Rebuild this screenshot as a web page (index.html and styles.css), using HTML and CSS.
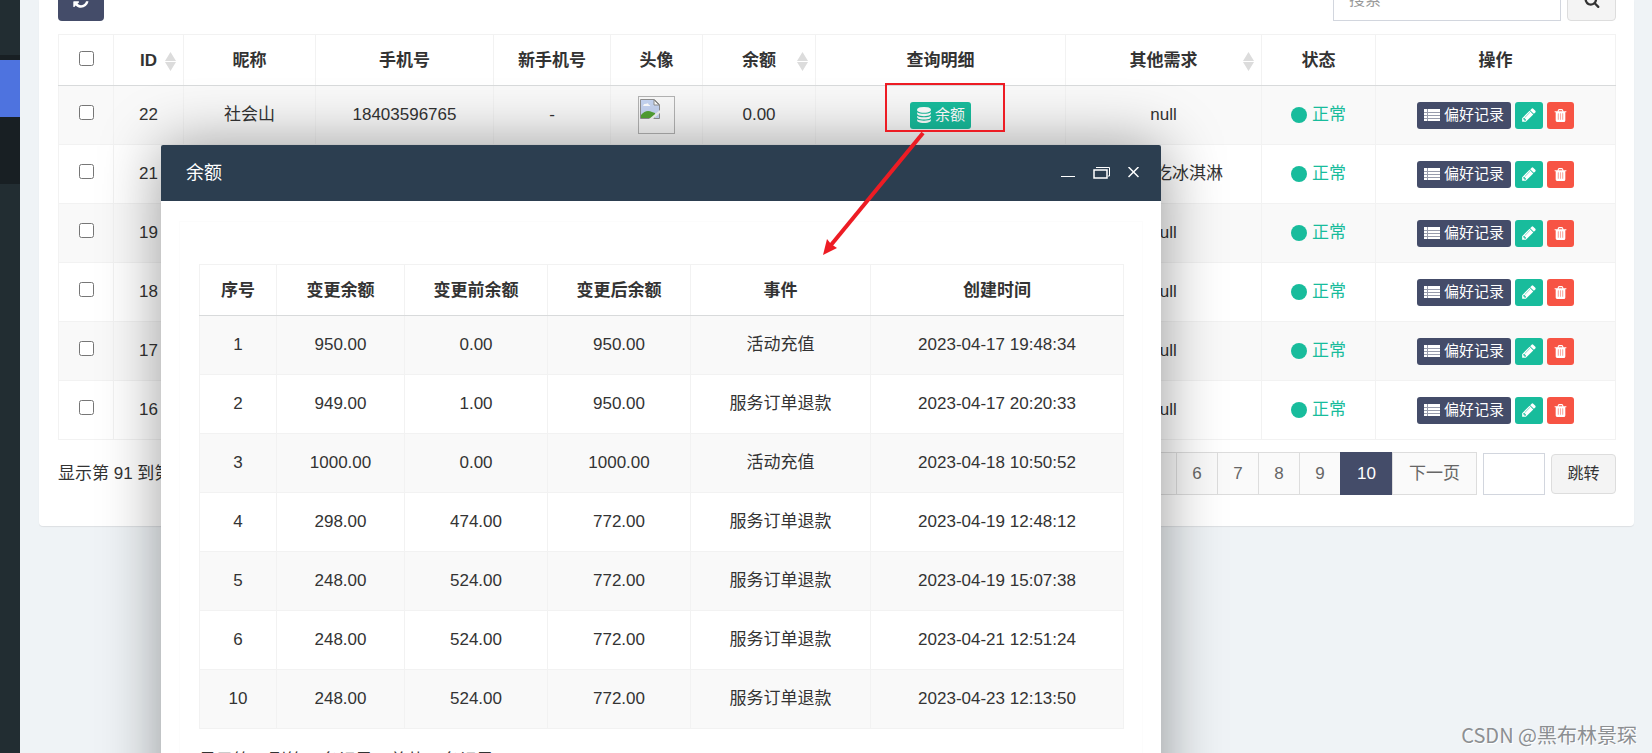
FILE: index.html
```html
<!DOCTYPE html>
<html lang="zh-CN">
<head>
<meta charset="utf-8">
<title>余额</title>
<link rel="stylesheet" href="styles.css">
</head>
<body>
<svg class="sprite" aria-hidden="true">
  <symbol id="i-list" viewBox="0 0 16 12"><path d="M0 0h3v3H0zM4 0h12v3H4zM0 4h3v2H0zM4 4h12v2H4zM0 7h3v2H0zM4 7h12v2H4zM0 10h3v2H0zM4 10h12v2H4z"/><path d="M0 0h16v12H0z" opacity=".45"/></symbol>
  <symbol id="i-pencil" viewBox="0 0 1792 1792"><path d="M491 1536l91-91-235-235-91 91v107h128v128h107zm523-928q0-22-22-22-10 0-17 7l-542 542q-7 7-7 17 0 22 22 22 10 0 17-7l542-542q7-7 7-17zm-54-192l416 416-832 832h-416v-416zm683 96q0 53-37 90l-166 166-416-416 166-165q36-38 90-38 53 0 91 38l235 234q37 39 37 91z"/></symbol>
  <symbol id="i-trash" viewBox="0 0 1792 1792"><path d="M704 1376v-704q0-14-9-23t-23-9h-64q-14 0-23 9t-9 23v704q0 14 9 23t23 9h64q14 0 23-9t9-23zm256 0v-704q0-14-9-23t-23-9h-64q-14 0-23 9t-9 23v704q0 14 9 23t23 9h64q14 0 23-9t9-23zm256 0v-704q0-14-9-23t-23-9h-64q-14 0-23 9t-9 23v704q0 14 9 23t23 9h64q14 0 23-9t9-23zm-544-992h448l-48-117q-7-9-17-11h-317q-10 2-17 11zm928 32v64q0 14-9 23t-23 9h-96v948q0 83-47 143.500t-113 60.500h-832q-66 0-113-58.500t-47-141.500v-952h-96q-14 0-23-9t-9-23v-64q0-14 9-23t23-9h309l70-167q15-37 54-63t79-26h320q40 0 79 26t54 63l70 167h309q14 0 23 9t9 23z"/><path d="M520 600h740v860H520z" opacity=".5"/></symbol>
  <symbol id="i-database" viewBox="0 0 1792 1792"><path d="M896 768q237 0 443-43t325-127v170q0 69-103 128t-280 93.500-385 34.500-385-34.500-280-93.500-103-128v-170q119 84 325 127t443 43zm0 768q237 0 443-43t325-127v170q0 69-103 128t-280 93.500-385 34.500-385-34.500-280-93.500-103-128v-170q119 84 325 127t443 43zm0-384q237 0 443-43t325-127v170q0 69-103 128t-280 93.500-385 34.500-385-34.500-280-93.500-103-128v-170q119 84 325 127t443 43zm0-1152q208 0 385 34.500t280 93.500 103 128v128q0 69-103 128t-280 93.500-385 34.500-385-34.500-280-93.500-103-128v-128q0-69 103-128t280-93.500 385-34.500z"/></symbol>
  <symbol id="i-search" viewBox="0 0 1792 1792"><path d="M1216 832q0-185-131.500-316.500t-316.500-131.500-316.500 131.500-131.500 316.500 131.500 316.500 316.500 131.500 316.500-131.500 131.500-316.500zm512 832q0 52-38 90t-90 38q-54 0-90-38l-343-342q-179 124-399 124-143 0-273.500-55.500t-225-150-150-225-55.500-273.500 55.500-273.500 150-225 225-150 273.500-55.500 273.500 55.500 225 150 150 225 55.500 273.500q0 220-124 399l343 343q37 37 37 90z"/></symbol>
  <symbol id="i-refresh" viewBox="0 0 1792 1792"><path d="M1639 1056q0 5-1 7-64 268-268 434.500t-478 166.500q-146 0-282.500-55t-243.500-157l-129 129q-19 19-45 19t-45-19-19-45v-448q0-26 19-45t45-19h448q26 0 45 19t19 45-19 45l-137 137q71 66 161 102t187 36q134 0 250-65t186-179q11-17 53-117 8-23 30-23h192q13 0 22.500 9.500t9.500 22.500zm25-800v448q0 26-19 45t-45 19h-448q-26 0-45-19t-19-45 19-45l138-138q-148-137-349-137-134 0-250 65t-186 179q-11 17-53 117-8 23-30 23h-199q-13 0-22.500-9.500t-9.500-22.500v-7q65-268 270-434.500t480-166.500q146 0 284 55.500t245 156.500l130-129q19-19 45-19t45 19 19 45z"/></symbol>
  <symbol id="i-sort" viewBox="0 0 11 19"><path d="M5.500 0L11 9H0zM0 10h11L5.500 19z"/></symbol>
</svg>

<div class="app">
  <aside class="sidebar">
    <div class="side-gap"></div>
    <div class="side-active"></div>
    <div class="side-sub"></div>
  </aside>

  <main class="content">
    <section class="panel">
      <div class="toolbar">
        <button class="btn-refresh" aria-label="刷新"><svg><use href="#i-refresh"/></svg></button>
        <div class="search">
          <input type="text" placeholder="搜索" aria-label="搜索">
          <button class="btn-default btn-search" aria-label="查找"><svg><use href="#i-search"/></svg></button>
        </div>
      </div>

      <table class="grid users">
        <colgroup><col class="u1"><col class="u2"><col class="u3"><col class="u4"><col class="u5"><col class="u6"><col class="u7"><col class="u8"><col class="u9"><col class="u10"><col class="u11"></colgroup>
        <thead>
          <tr>
            <th class="pick"><input type="checkbox" aria-label="全选"></th>
            <th><div class="sortable"><span>ID</span><svg><use href="#i-sort"/></svg></div></th>
            <th>昵称</th><th>手机号</th><th>新手机号</th><th>头像</th>
            <th><div class="sortable"><span>余额</span><svg><use href="#i-sort"/></svg></div></th>
            <th>查询明细</th>
            <th><div class="sortable"><span>其他需求</span><svg><use href="#i-sort"/></svg></div></th>
            <th>状态</th><th>操作</th>
          </tr>
        </thead>
        <tbody>
          <tr>
            <td class="pick"><input type="checkbox" aria-label="选择 22"></td><td>22</td><td>社会山</td><td>18403596765</td><td>-</td>
            <td><div class="avatar"><svg viewBox="0 0 20 20" role="img" aria-label="头像"><path d="M.5.500h14l5 5v14H.5z" fill="#c6d5f3" stroke="#909090"/><path d="M14 1v5h5z" fill="#fff" stroke="#909090"/><path d="M3 7q1-3 3-2 2-2 3 1 2 0 1 1z" fill="#fff"/><path d="M1 19v-3q5-6 11-3l3 1v5z" fill="#53a334"/><path d="M9 20l11-9v3l-7 6z" fill="#f4f4f4"/></svg></div></td>
            <td>0.00</td>
            <td><button class="btn green"><svg class="ico-16"><use href="#i-database"/></svg>余额</button></td>
            <td>null</td><td><a class="status" href="#"><i></i>正常</a></td>
            <td><div class="ops"><button class="btn navy"><svg class="ico-list"><use href="#i-list"/></svg>偏好记录</button><button class="btn green" aria-label="编辑"><svg class="ico-16"><use href="#i-pencil"/></svg></button><button class="btn red" aria-label="删除"><svg class="ico"><use href="#i-trash"/></svg></button></div></td>
          </tr>
          <tr>
            <td class="pick"><input type="checkbox" aria-label="选择 21"></td><td>21</td><td></td><td></td><td></td><td></td><td></td><td></td>
            <td>我喜欢吃冰淇淋</td><td><a class="status" href="#"><i></i>正常</a></td>
            <td><div class="ops"><button class="btn navy"><svg class="ico-list"><use href="#i-list"/></svg>偏好记录</button><button class="btn green" aria-label="编辑"><svg class="ico-16"><use href="#i-pencil"/></svg></button><button class="btn red" aria-label="删除"><svg class="ico"><use href="#i-trash"/></svg></button></div></td>
          </tr>
          <tr>
            <td class="pick"><input type="checkbox" aria-label="选择 19"></td><td>19</td><td></td><td></td><td></td><td></td><td></td><td></td>
            <td>null</td><td><a class="status" href="#"><i></i>正常</a></td>
            <td><div class="ops"><button class="btn navy"><svg class="ico-list"><use href="#i-list"/></svg>偏好记录</button><button class="btn green" aria-label="编辑"><svg class="ico-16"><use href="#i-pencil"/></svg></button><button class="btn red" aria-label="删除"><svg class="ico"><use href="#i-trash"/></svg></button></div></td>
          </tr>
          <tr>
            <td class="pick"><input type="checkbox" aria-label="选择 18"></td><td>18</td><td></td><td></td><td></td><td></td><td></td><td></td>
            <td>null</td><td><a class="status" href="#"><i></i>正常</a></td>
            <td><div class="ops"><button class="btn navy"><svg class="ico-list"><use href="#i-list"/></svg>偏好记录</button><button class="btn green" aria-label="编辑"><svg class="ico-16"><use href="#i-pencil"/></svg></button><button class="btn red" aria-label="删除"><svg class="ico"><use href="#i-trash"/></svg></button></div></td>
          </tr>
          <tr>
            <td class="pick"><input type="checkbox" aria-label="选择 17"></td><td>17</td><td></td><td></td><td></td><td></td><td></td><td></td>
            <td>null</td><td><a class="status" href="#"><i></i>正常</a></td>
            <td><div class="ops"><button class="btn navy"><svg class="ico-list"><use href="#i-list"/></svg>偏好记录</button><button class="btn green" aria-label="编辑"><svg class="ico-16"><use href="#i-pencil"/></svg></button><button class="btn red" aria-label="删除"><svg class="ico"><use href="#i-trash"/></svg></button></div></td>
          </tr>
          <tr>
            <td class="pick"><input type="checkbox" aria-label="选择 16"></td><td>16</td><td></td><td></td><td></td><td></td><td></td><td></td>
            <td>null</td><td><a class="status" href="#"><i></i>正常</a></td>
            <td><div class="ops"><button class="btn navy"><svg class="ico-list"><use href="#i-list"/></svg>偏好记录</button><button class="btn green" aria-label="编辑"><svg class="ico-16"><use href="#i-pencil"/></svg></button><button class="btn red" aria-label="删除"><svg class="ico"><use href="#i-trash"/></svg></button></div></td>
          </tr>
        </tbody>
      </table>

      <div class="footer">
        <span>显示第 91 到第 96 条记录</span>
        <div class="pager">
          <nav class="pages">
            <a href="#">5</a><a href="#">6</a><a href="#">7</a><a href="#">8</a><a href="#">9</a><a href="#" class="current">10</a><a href="#" class="next">下一页</a>
          </nav>
          <input type="text" aria-label="页码">
          <button class="btn-default btn-jump">跳转</button>
        </div>
      </div>
    </section>
  </main>
</div>

<div class="dialog" role="dialog" aria-labelledby="dialog-title">
  <header class="dialog-head">
    <span id="dialog-title">余额</span>
    <div class="dialog-tools">
      <button aria-label="最小化"><svg width="14" height="12" viewBox="0 0 14 12"><path d="M0 9.500h14" stroke="#fff"/></svg></button>
      <button aria-label="还原"><svg width="17" height="12" viewBox="0 0 17 12"><path d="M3 .500h13.500V9H15" fill="none" stroke="#fff"/><path d="M1 3h13v8H1z" fill="none" stroke="#fff" stroke-width="1.500"/></svg></button>
      <button aria-label="关闭"><svg width="11" height="12" viewBox="0 0 11 12"><path d="M.5 0l10 10M10.500 0l-10 10" stroke="#fff" stroke-width="1.500"/></svg></button>
    </div>
  </header>
  <div class="dialog-body">
    <div class="sheet">
      <table class="grid">
        <colgroup><col class="b1"><col class="b2"><col class="b3"><col class="b4"><col class="b5"><col class="b6"></colgroup>
        <thead><tr><th>序号</th><th>变更余额</th><th>变更前余额</th><th>变更后余额</th><th>事件</th><th>创建时间</th></tr></thead>
        <tbody>
          <tr><td>1</td><td>950.00</td><td>0.00</td><td>950.00</td><td>活动充值</td><td>2023-04-17 19:48:34</td></tr>
          <tr><td>2</td><td>949.00</td><td>1.00</td><td>950.00</td><td>服务订单退款</td><td>2023-04-17 20:20:33</td></tr>
          <tr><td>3</td><td>1000.00</td><td>0.00</td><td>1000.00</td><td>活动充值</td><td>2023-04-18 10:50:52</td></tr>
          <tr><td>4</td><td>298.00</td><td>474.00</td><td>772.00</td><td>服务订单退款</td><td>2023-04-19 12:48:12</td></tr>
          <tr><td>5</td><td>248.00</td><td>524.00</td><td>772.00</td><td>服务订单退款</td><td>2023-04-19 15:07:38</td></tr>
          <tr><td>6</td><td>248.00</td><td>524.00</td><td>772.00</td><td>服务订单退款</td><td>2023-04-21 12:51:24</td></tr>
          <tr><td>10</td><td>248.00</td><td>524.00</td><td>772.00</td><td>服务订单退款</td><td>2023-04-23 12:13:50</td></tr>
        </tbody>
      </table>
      <p class="summary">显示第 1 到第 7 条记录，总共 7 条记录</p>
    </div>
  </div>
</div>

<svg class="callout" viewBox="0 0 184 176" aria-hidden="true">
  <rect x="64" y="3" width="118" height="47" fill="none" stroke="#ed1c24" stroke-width="2"/>
  <path d="M101 52L9 164" stroke="#ed1c24" stroke-width="4"/>
  <path d="M1 174L5 158l4 5 6 4z" fill="#ed1c24"/>
</svg>
<div class="watermark">CSDN @黑布林景琛</div>
</body>
</html>
```

FILE: styles.css
```css
* { box-sizing: border-box; }

body {
  margin: 0;
  height: 100vh;
  overflow: hidden;
  position: relative;
  background: #eff3f6;
  color: #333;
  font-family: "Liberation Sans", "Noto Sans CJK SC", sans-serif;
  font-size: 17px;
  line-height: 24px;
}

button, input { font: inherit; color: inherit; margin: 0; }
button { cursor: pointer; }
a { color: inherit; text-decoration: none; }
svg { fill: currentColor; display: block; }
.sprite { position: absolute; width: 0; height: 0; }

.app { display: flex; min-height: 100vh; }

/* Sidebar */
.sidebar { flex: none; width: 20px; padding-top: 55px; background: #222d32; }
.side-gap { height: 5px; background: #181f23; }
.side-active { height: 57px; background: #4e73df; }
.side-sub { height: 67px; background: #181f23; }

/* Main panel */
.content { flex: 1; min-width: 0; padding: 0 18px 0 19px; }
.panel {
  padding: 0 18px 31px 19px;
  background: #fff;
  border-radius: 0 0 4px 4px;
  box-shadow: 0 1px 1px rgba(0, 0, 0, .08);
}

.toolbar {
  display: flex;
  justify-content: space-between;
  align-items: flex-end;
  height: 21px;
  margin-bottom: 13px;
  overflow: hidden;
}
.btn-refresh {
  display: grid;
  place-items: center;
  width: 46px;
  height: 42px;
  border: 0;
  border-radius: 4px;
  background: #444c69;
  color: #fff;
}
.btn-refresh svg { width: 18px; height: 18px; }
.search { display: flex; gap: 6px; align-items: flex-end; }
.search input { width: 228px; height: 42px; padding: 0 15px; border: 1px solid #d2d6de; font-size: 16px; }
.search input::placeholder { color: #999; }
.btn-default { border: 1px solid #ddd; border-radius: 4px; background: #f4f4f4; color: #333; }
.btn-search { display: grid; place-items: center; width: 49px; height: 42px; }
.btn-search svg { width: 16px; height: 16px; }

/* Tables */
.grid { width: 100%; table-layout: fixed; border-collapse: collapse; background: #fff; }
.grid th, .grid td { padding: 0; border: 1px solid #f2f2f2; text-align: center; vertical-align: middle; }
.grid th { height: 51px; padding-top: 2px; border-bottom-color: #d8dadb; font-weight: 700; }
.grid td { height: 59px; }
.grid tbody tr:nth-child(odd) { background: #f9f9f9; }

.u1 { width: 55px; }
.u2 { width: 70px; }
.u3 { width: 132px; }
.u4 { width: 178px; }
.u5 { width: 117px; }
.u6 { width: 92px; }
.u7 { width: 113px; }
.u8 { width: 250px; }
.u9 { width: 196px; }
.u10 { width: 114px; }
.u11 { width: 240px; }

.b1 { width: 77px; }
.b2 { width: 128px; }
.b3 { width: 143px; }
.b4 { width: 143px; }
.b5 { width: 180px; }
.b6 { width: 253px; }

.pick input { display: block; width: 15px; height: 15px; margin: 0 auto 6px; }

.sortable { display: grid; grid-template-columns: 1fr auto 1fr; align-items: center; padding: 0 7px; }
.sortable span { grid-column: 2; }
.sortable svg { justify-self: end; width: 11px; height: 19px; color: #dcdcdc; }

.avatar { width: 37px; height: 38px; margin: 0 auto; padding: 2px 1px; border: 1px solid #b4b4b4; }
.avatar svg { width: 20px; height: 20px; }

.btn {
  display: inline-flex;
  align-items: center;
  gap: 3px;
  height: 27px;
  padding: 0 6px;
  border: 0;
  border-radius: 3px;
  color: #fff;
  font-size: 15px;
  line-height: 24px;
  white-space: nowrap;
  vertical-align: middle;
}
.green { background: #18bc9c; }
.navy { gap: 4px; padding: 0 7px; background: #444c69; }
.red { background: #f75444; }
.ico { width: 15px; height: 15px; }
.ico-16 { width: 16px; height: 16px; }
.ico-list { width: 16px; height: 12px; }
.ops { display: flex; justify-content: center; gap: 4px; }

.status { display: inline-flex; align-items: center; gap: 5px; color: #18bc9c; vertical-align: middle; }
.status i { width: 16px; height: 16px; border-radius: 50%; background: #18bc9c; }

/* Table footer */
.footer { display: flex; justify-content: space-between; align-items: center; margin-top: 12px; }
.pager { display: flex; align-items: center; gap: 6px; }
.pages { display: flex; color: #666; }
.pages a {
  min-width: 42px;
  height: 43px;
  margin-right: -1px;
  padding: 0 15px;
  border: 1px solid #ddd;
  background: #fafafa;
  line-height: 41px;
  text-align: center;
}
.pages .current { min-width: 53px; border-color: #444c69; background: #444c69; color: #fff; }
.pages .next { min-width: 85px; margin-right: 0; }
.pager input { width: 62px; height: 42px; border: 1px solid #d2d6de; }
.btn-jump { width: 65px; height: 40px; padding: 0; font-size: 16px; }

/* Dialog window */
.dialog {
  position: absolute;
  top: 145px;
  left: 161px;
  width: 1000px;
  border-radius: 2px;
  background: #fff;
  box-shadow: 1px 1px 62px rgba(0, 0, 0, .4);
}
.dialog-head {
  display: flex;
  justify-content: space-between;
  align-items: center;
  height: 56px;
  padding: 0 22px 0 25px;
  border-radius: 2px 2px 0 0;
  background: #2c3e50;
  color: #fff;
  font-size: 18px;
}
.dialog-tools { display: flex; gap: 18px; }
.dialog-tools button { padding: 0; border: 0; background: none; }
.dialog-body { padding: 20px 18px 60px; }
.sheet { padding: 42px 20px 19px 19px; border: 1px solid #fcfcfc; }
.summary { margin: 20px 0 0; }

/* Overlays */
.callout { position: absolute; top: 81px; left: 822px; width: 184px; height: 176px; }
.watermark {
  position: absolute;
  right: 15px;
  bottom: 5px;
  color: #8c8f92;
  font-family: "Noto Sans CJK SC", sans-serif;
  font-size: 20px;
  line-height: 26px;
  text-shadow: 1px 1px 0 #fff;
}
```
